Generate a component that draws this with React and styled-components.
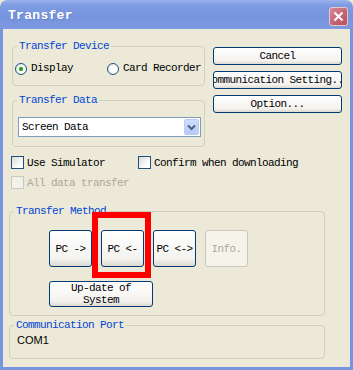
import React from "react";
import styled, { createGlobalStyle } from "styled-components";

const GlobalStyle = createGlobalStyle`
  html, body {
    margin: 0;
    padding: 0;
    background: #ece9d8;
  }
`;

const Window = styled.div`
  position: relative;
  width: 353px;
  height: 370px;
  display: flex;
  flex-direction: column;
  font-family: "Liberation Mono", "DejaVu Sans Mono", monospace;
  font-size: 11px;
  letter-spacing: -0.6px;
  color: #000;
`;

const TitleBar = styled.div`
  height: 29px;
  flex: none;
  display: flex;
  align-items: center;
  justify-content: space-between;
  padding: 1px 5px 0 8px;
  box-sizing: border-box;
  border-radius: 7px 7px 0 0;
  background: linear-gradient(#9bb2ec 0%, #7e9be2 18%, #7694de 60%, #7d99e0 100%);
`;

const Title = styled.span`
  font-family: "Liberation Mono", monospace;
  font-size: 13px;
  font-weight: bold;
  letter-spacing: 0.3px;
  color: #fff;
  text-shadow: 1px 1px 0 #6a84c8;
`;

const CloseBox = styled.div`
  width: 19px;
  height: 19px;
  margin-top: 2px;
  border: 1px solid #e7c6cc;
  border-radius: 3px;
  box-sizing: border-box;
  background: linear-gradient(135deg, #d78a95, #c2606f 60%, #b5505f);
  display: flex;
  align-items: center;
  justify-content: center;
`;

const Body = styled.div`
  flex: 1;
  display: flex;
  flex-direction: column;
  border: 3px solid #7794dd;
  border-top: none;
  background: #ece9d8;
`;

const TopRow = styled.div`
  display: flex;
  gap: 8px;
  margin: 11px 0 0 9px;
`;

const LeftCol = styled.div`
  display: flex;
  flex-direction: column;
  gap: 8px;
  width: 193px;
`;

const RightCol = styled.div`
  display: flex;
  flex-direction: column;
  gap: 6px;
  margin-top: 7px;
`;

const Group = styled.fieldset`
  margin: ${(p) => p.$margin || "0"};
  width: ${(p) => p.$width || "auto"};
  padding: 0 2px;
  box-sizing: border-box;
  border: 1px solid #d0d0bf;
  border-radius: 4px;
  min-width: 0;
`;

const Legend = styled.legend`
  color: #0046d5;
  padding: 0 2px;
  margin-left: 2px;
  line-height: 12px;
`;

const GroupBody = styled.div`
  padding: ${(p) => p.$pad};
`;

const RadioRow = styled.div`
  display: flex;
  align-items: center;
  height: 13px;
`;

const RadioItem = styled.label`
  display: flex;
  align-items: center;
  gap: 4px;
  width: ${(p) => p.$width || "auto"};
  line-height: 13px;
  white-space: nowrap;
`;

const RadioCircle = styled.span`
  width: 12px;
  height: 12px;
  flex: none;
  border-radius: 50%;
  border: 1px solid #1c5180;
  box-sizing: border-box;
  background: radial-gradient(circle at 60% 60%, #fff 30%, #dcdcd4 100%);
  display: flex;
  align-items: center;
  justify-content: center;

  &::after {
    content: "";
    width: 4px;
    height: 4px;
    border-radius: 50%;
    background: ${(p) => (p.$checked ? "#21a121" : "transparent")};
    box-shadow: ${(p) => (p.$checked ? "0 0 1px #5fd35f" : "none")};
  }
`;

const Select = styled.div`
  height: 20px;
  width: 183px;
  box-sizing: border-box;
  border: 1px solid #7f9db9;
  background: #fff;
  display: flex;
  align-items: center;
  justify-content: space-between;
  padding: 0 1px 0 3px;
`;

const DropBtn = styled.span`
  width: 15px;
  height: 16px;
  border-radius: 2px;
  background: linear-gradient(#cfdcfb, #b7cbf6);
  border: 1px solid #bccdf4;
  box-sizing: border-box;
  display: flex;
  align-items: center;
  justify-content: center;
`;

const Button = styled.div`
  width: ${(p) => p.$w}px;
  height: ${(p) => p.$h}px;
  margin-top: ${(p) => p.$top || 0}px;
  box-sizing: border-box;
  border: 1px solid ${(p) => (p.$disabled ? "#cac8bb" : "#003c74")};
  border-radius: 3px;
  background: ${(p) =>
    p.$disabled ? "#f5f4ea" : "linear-gradient(#ffffff, #f3f2ee 80%, #dcd9cf)"};
  color: ${(p) => (p.$disabled ? "#aca899" : "#000")};
  display: flex;
  align-items: center;
  justify-content: center;
  text-align: center;
  line-height: 12px;
  overflow: hidden;
  white-space: ${(p) => (p.$wrap ? "normal" : "nowrap")};
`;

const CheckRow = styled.div`
  display: flex;
  align-items: center;
  height: 13px;
  margin: ${(p) => p.$margin};
  padding-left: 8px;
`;

const CheckItem = styled.label`
  display: flex;
  align-items: center;
  gap: 3px;
  width: ${(p) => p.$width || "auto"};
  color: ${(p) => (p.$disabled ? "#aca899" : "#000")};
  white-space: nowrap;
`;

const CheckBox = styled.span`
  width: 13px;
  height: 13px;
  flex: none;
  box-sizing: border-box;
  border: 1px solid ${(p) => (p.$disabled ? "#cac8bb" : "#1c5180")};
  background: ${(p) =>
    p.$disabled ? "#f2f1ea" : "linear-gradient(135deg, #dcdcd7, #fff 80%)"};
`;

const MethodRow = styled.div`
  display: flex;
  gap: 9px;
`;

const PortText = styled.div`
  font-family: "Liberation Sans", Arial, sans-serif;
  font-size: 11px;
  letter-spacing: 0;
  line-height: 13px;
`;

const Highlight = styled.div`
  position: absolute;
  left: 92px;
  top: 212px;
  width: 59px;
  height: 66px;
  box-sizing: border-box;
  border: 6px solid #f00;
  pointer-events: none;
`;

export default function App() {
  return (
    <Window>
      <GlobalStyle />
      <TitleBar>
        <Title>Transfer</Title>
        <CloseBox>
          <svg width="11" height="11" viewBox="0 0 11 11">
            <path d="M1.5 1.5 L9.5 9.5 M9.5 1.5 L1.5 9.5" stroke="#fff" strokeWidth="2" />
          </svg>
        </CloseBox>
      </TitleBar>
      <Body>
        <TopRow>
          <LeftCol>
            <Group>
              <Legend>Transfer Device</Legend>
              <GroupBody $pad="10px 0 10px 0">
                <RadioRow>
                  <RadioItem $width="92px">
                    <RadioCircle $checked />
                    Display
                  </RadioItem>
                  <RadioItem>
                    <RadioCircle />
                    Card Recorder
                  </RadioItem>
                </RadioRow>
              </GroupBody>
            </Group>
            <Group>
              <Legend>Transfer Data</Legend>
              <GroupBody $pad="11px 0 9px 3px">
                <Select>
                  <span>Screen Data</span>
                  <DropBtn>
                    <svg width="9" height="7" viewBox="0 0 9 7">
                      <path d="M1 1.5 L4.5 5 L8 1.5" stroke="#4d6185" strokeWidth="2" fill="none" />
                    </svg>
                  </DropBtn>
                </Select>
              </GroupBody>
            </Group>
          </LeftCol>
          <RightCol>
            <Button $w={129} $h={18}>Cancel</Button>
            <Button $w={129} $h={18}>Communication Setting...</Button>
            <Button $w={129} $h={18}>Option...</Button>
          </RightCol>
        </TopRow>

        <CheckRow $margin="9px 0 0 0">
          <CheckItem $width="127px">
            <CheckBox />
            Use Simulator
          </CheckItem>
          <CheckItem>
            <CheckBox />
            Confirm when downloading
          </CheckItem>
        </CheckRow>
        <CheckRow $margin="7px 0 0 0">
          <CheckItem $disabled>
            <CheckBox $disabled />
            All data transfer
          </CheckItem>
        </CheckRow>

        <Group $margin="16px 0 0 6px" $width="316px">
          <Legend>Transfer Method</Legend>
          <GroupBody $pad="13px 0 8px 37px">
            <MethodRow>
              <Button $w={43} $h={37}>PC -&gt;</Button>
              <Button $w={43} $h={37}>PC &lt;-</Button>
              <Button $w={43} $h={37}>PC &lt;-&gt;</Button>
              <Button $w={43} $h={37} $disabled>Info.</Button>
            </MethodRow>
            <Button $w={104} $h={26} $top={14} $wrap>
              Up-date of System
            </Button>
          </GroupBody>
        </Group>

        <Group $margin="3px 0 0 6px" $width="316px">
          <Legend>Communication Port</Legend>
          <GroupBody $pad="3px 0 11px 5px">
            <PortText>COM1</PortText>
          </GroupBody>
        </Group>
      </Body>
      <Highlight />
    </Window>
  );
}
